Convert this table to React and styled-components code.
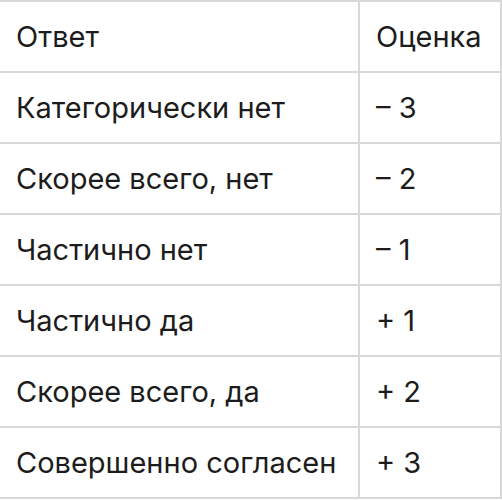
import styled, { createGlobalStyle } from "styled-components";

const GlobalStyle = createGlobalStyle`
    html, body {
        margin: 0;
        padding: 0;
        background: #fff;
    }
    body {
        font-family: Inter, Roboto, "Liberation Sans", sans-serif;
        color: #1c1c1c;
    }
`

const Table = styled.table`
    width: 502px;
    border-collapse: collapse;
    border-top: 2px solid #d8d8d8;
    border-right: 2px solid #d8d8d8;
`

const Cell = styled.td`
    height: 69px;
    padding: 0 0 0 16px;
    font-size: 29px;
    line-height: 1;
    text-align: left;
    font-weight: 400;
    border-bottom: 2px solid #d8d8d8;
    border-left: ${ props => props.$divided ? "2px solid #d8d8d8" : "none" };
    width: ${ props => props.$divided ? "124px" : "auto" };
    white-space: nowrap;
`

const HeadCell = styled(Cell).attrs( props => ({
    as: 'th',
}))``

const rows = [
    ["Категорически нет", "– 3"],
    ["Скорее всего, нет", "– 2"],
    ["Частично нет", "– 1"],
    ["Частично да", "+ 1"],
    ["Скорее всего, да", "+ 2"],
    ["Совершенно согласен", "+ 3"],
]

function App() {
    return (
        <>
            <GlobalStyle />
            <Table>
                <thead>
                    <tr>
                        <HeadCell>Ответ</HeadCell>
                        <HeadCell $divided>Оценка</HeadCell>
                    </tr>
                </thead>
                <tbody>
                    { rows.map( ([answer, score]) => (
                        <tr key={ answer }>
                            <Cell>{ answer }</Cell>
                            <Cell $divided>{ score }</Cell>
                        </tr>
                    )) }
                </tbody>
            </Table>
        </>
    );
}

export default App;
